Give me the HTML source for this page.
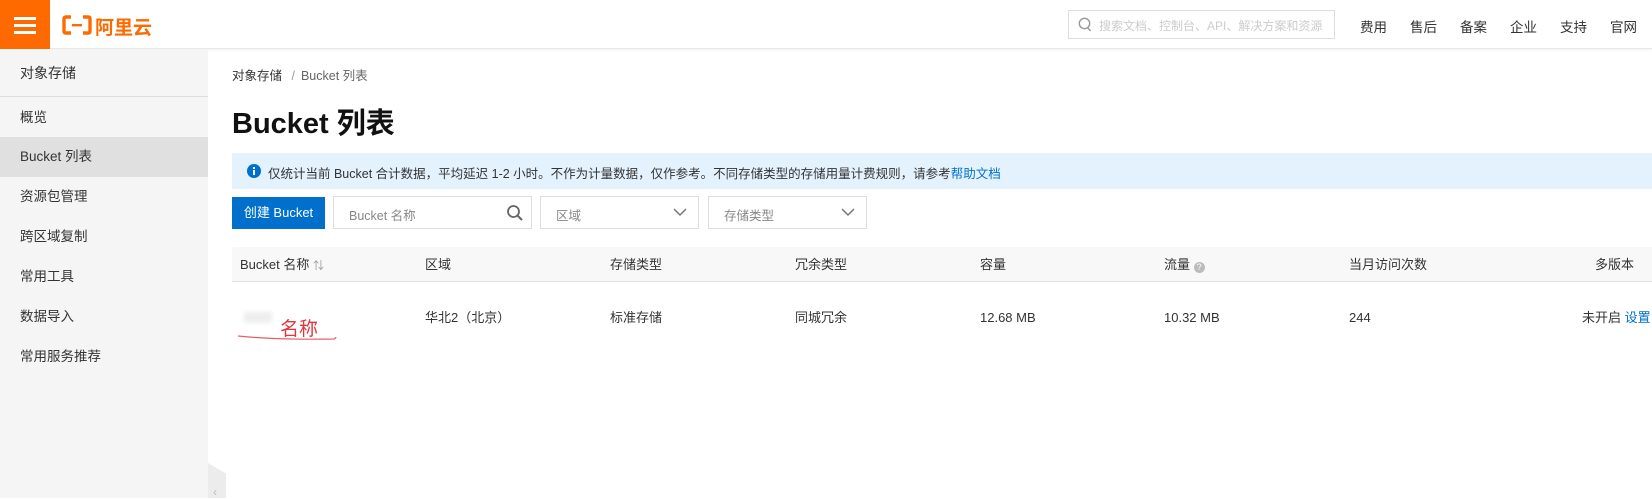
<!DOCTYPE html>
<html><head><meta charset="utf-8"><style>
*{margin:0;padding:0;box-sizing:border-box}
body{width:1652px;height:498px;overflow:hidden;background:#fff;font-family:"Liberation Sans","Noto Sans CJK SC",sans-serif;color:#333;font-size:13px;position:relative}
.a{position:absolute;white-space:nowrap}
#hdr{position:absolute;left:0;top:0;width:1652px;height:49px;background:#fff;border-bottom:1px solid #e8e8e8;box-shadow:0 1px 3px rgba(0,0,0,.06)}
#ham{position:absolute;left:0;top:0;width:50px;height:49px;background:#ff6a00}
#ham i{position:absolute;left:14px;width:22px;height:3px;background:#fff}
#side{position:absolute;left:0;top:49px;width:208px;height:449px;background:#f5f5f5}
.si{position:absolute;left:20px;font-size:13.5px;color:#333;line-height:20px}
.sel{border:1px solid #ddd;background:#fff;position:absolute;height:33px}
.th{position:absolute;top:256px;font-size:13px;color:#333;line-height:18px}
.td{position:absolute;top:309px;font-size:13px;color:#333;line-height:18px;white-space:nowrap}
.nav span{position:absolute}
</style></head><body>
<div id="hdr">
 <div id="ham"><i style="top:17px"></i><i style="top:24px"></i><i style="top:31px"></i></div>
 <svg class="a" style="left:62px;top:15px" width="30" height="20" viewBox="0 0 30 20"><path d="M9 2H4Q2 2 2 4V16Q2 18 4 18H9M21 2H26Q28 2 28 4V16Q28 18 26 18H21" fill="none" stroke="#ff6a00" stroke-width="3.4"/><rect x="10" y="9" width="10" height="2.4" fill="#ff6a00"/></svg>
 <div class="a" style="left:95px;top:13px;font-size:19px;font-weight:bold;color:#ff6a00">阿里云</div>
 <div class="a" style="left:1068px;top:10px;width:267px;height:29px;border:1px solid #ddd;background:#fff;overflow:hidden">
  <svg class="a" style="left:9px;top:6px" width="14" height="16" viewBox="0 0 14 16"><circle cx="6.5" cy="6.5" r="5.2" fill="none" stroke="#999" stroke-width="1.4"/><path d="M9.5 10.5L12.5 14" stroke="#999" stroke-width="1.4"/></svg>
  <div class="a" style="left:30px;top:6px;font-size:12px;color:#ccc">搜索文档、控制台、API、解决方案和资源</div>
 </div>
 <div class="a nav" style="left:1360px;top:16px;font-size:13.5px;color:#333">
  <span style="left:0">费用</span><span style="left:50px">售后</span><span style="left:100px">备案</span><span style="left:150px">企业</span><span style="left:200px">支持</span><span style="left:250px">官网</span>
 </div>
</div>
<div id="side">
 <div class="si" style="top:14px;font-size:14px">对象存储</div>
 <div style="position:absolute;left:0;top:47px;width:208px;height:1px;background:#ddd"></div>
 <div class="si" style="top:59px">概览</div>
 <div style="position:absolute;left:0;top:88px;width:208px;height:40px;background:#e0e0e0"></div>
 <div class="si" style="top:98px">Bucket 列表</div>
 <div class="si" style="top:138px">资源包管理</div>
 <div class="si" style="top:178px">跨区域复制</div>
 <div class="si" style="top:218px">常用工具</div>
 <div class="si" style="top:258px">数据导入</div>
 <div class="si" style="top:298px">常用服务推荐</div>
</div>
<div class="a" style="left:208px;top:463px;width:18px;height:35px;background:#ececec;clip-path:polygon(0 0,100% 30%,100% 100%,0 100%)"></div>
<div class="a" style="left:213px;top:485px;font-size:12px;color:#bbb">‹</div>

<div class="a" style="left:232px;top:65px;font-size:12.5px;color:#333">对象存储 <span style="color:#999;margin:0 6px">/</span><span style="color:#666">Bucket 列表</span></div>
<div class="a" style="left:232px;top:100px;font-size:29px;font-weight:bold;color:#111">Bucket 列表</div>
<div class="a" style="left:232px;top:153px;width:1420px;height:36px;background:#e3f2fd"></div>
<svg class="a" style="left:247px;top:164px" width="14" height="14" viewBox="0 0 14 14"><circle cx="7" cy="7" r="7" fill="#0070cc"/><rect x="6" y="6" width="2" height="5" fill="#fff"/><rect x="6" y="3" width="2" height="2" fill="#fff"/></svg>
<div class="a" style="left:268px;top:163px;font-size:12.5px;color:#333">仅统计当前 Bucket 合计数据，平均延迟 1-2 小时。不作为计量数据，仅作参考。不同存储类型的存储用量计费规则，请参考<span style="color:#0070cc">帮助文档</span></div>

<div class="a" style="left:232px;top:197px;width:93px;height:32px;background:#0070cc;color:#fff;font-size:13px;line-height:32px;text-align:center">创建 Bucket</div>
<div class="sel" style="left:333px;top:196px;width:199px">
 <div class="a" style="left:15px;top:8px;color:#888;font-size:12.5px">Bucket 名称</div>
 <svg class="a" style="left:172px;top:7px" width="18" height="18" viewBox="0 0 18 18"><circle cx="7.5" cy="7.5" r="5.5" fill="none" stroke="#666" stroke-width="1.8"/><path d="M11.5 11.5L16 16" stroke="#666" stroke-width="2"/></svg>
</div>
<div class="sel" style="left:540px;top:196px;width:159px">
 <div class="a" style="left:15px;top:8px;color:#888;font-size:12.5px">区域</div>
 <svg class="a" style="left:132px;top:11px" width="14" height="9" viewBox="0 0 14 9"><path d="M1 1L7 7L13 1" fill="none" stroke="#777" stroke-width="1.5"/></svg>
</div>
<div class="sel" style="left:708px;top:196px;width:159px">
 <div class="a" style="left:15px;top:8px;color:#888;font-size:12.5px">存储类型</div>
 <svg class="a" style="left:132px;top:11px" width="14" height="9" viewBox="0 0 14 9"><path d="M1 1L7 7L13 1" fill="none" stroke="#777" stroke-width="1.5"/></svg>
</div>

<div class="a" style="left:232px;top:247px;width:1420px;height:35px;background:#f8f8f8;border-bottom:1px solid #e3e3e3"></div>
<div class="th" style="left:240px">Bucket 名称 <span style="color:#999;font-size:11px">⇅</span></div>
<div class="th" style="left:425px">区域</div>
<div class="th" style="left:610px">存储类型</div>
<div class="th" style="left:795px">冗余类型</div>
<div class="th" style="left:980px">容量</div>
<div class="th" style="left:1164px">流量 <span style="display:inline-block;width:11px;height:11px;border-radius:50%;background:#bbb;color:#fff;font-size:9px;line-height:11px;text-align:center;vertical-align:-1px">?</span></div>
<div class="th" style="left:1349px">当月访问次数</div>
<div class="th" style="left:1595px">多版本</div>

<div class="a" style="left:244px;top:312px;width:28px;height:11px;background:#eee;filter:blur(2px)"></div>
<div class="a" style="left:280px;top:314px;font-size:19px;color:#e0363d">名称</div>
<svg class="a" style="left:236px;top:334px" width="102" height="10" viewBox="0 0 102 10"><path d="M2 2Q40 6 98 5Q100 4 100 3" fill="none" stroke="#e0363d" stroke-width="1.2" opacity=".8"/></svg>
<div class="td" style="left:425px">华北2（北京）</div>
<div class="td" style="left:610px">标准存储</div>
<div class="td" style="left:795px">同城冗余</div>
<div class="td" style="left:980px">12.68 MB</div>
<div class="td" style="left:1164px">10.32 MB</div>
<div class="td" style="left:1349px">244</div>
<div class="td" style="left:1582px">未开启 <span style="color:#0070cc">设置</span></div>
</body></html>
